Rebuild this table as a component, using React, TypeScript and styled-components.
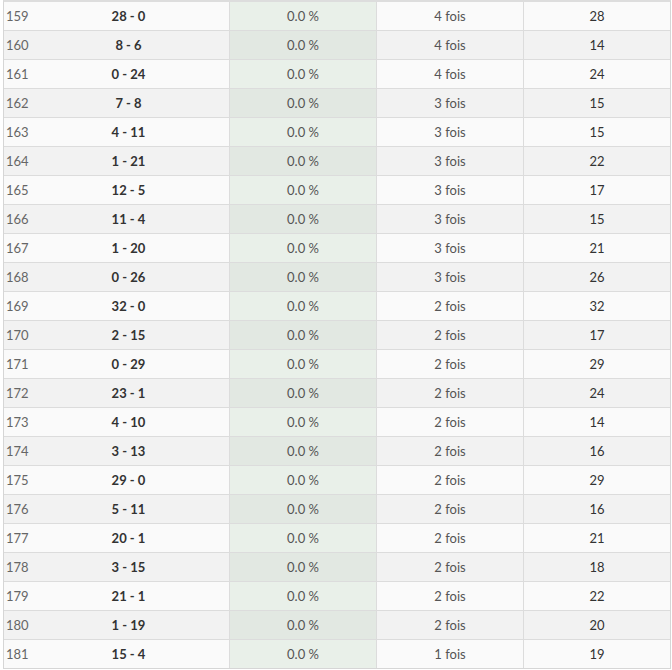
import React from 'react';
import styled, { createGlobalStyle } from 'styled-components';

// 行データ: [順位, スコア, 回数, 合計]
const rows: [number, string, number, number][] = [
  [159, '28 - 0', 4, 28],
  [160, '8 - 6', 4, 14],
  [161, '0 - 24', 4, 24],
  [162, '7 - 8', 3, 15],
  [163, '4 - 11', 3, 15],
  [164, '1 - 21', 3, 22],
  [165, '12 - 5', 3, 17],
  [166, '11 - 4', 3, 15],
  [167, '1 - 20', 3, 21],
  [168, '0 - 26', 3, 26],
  [169, '32 - 0', 2, 32],
  [170, '2 - 15', 2, 17],
  [171, '0 - 29', 2, 29],
  [172, '23 - 1', 2, 24],
  [173, '4 - 10', 2, 14],
  [174, '3 - 13', 2, 16],
  [175, '29 - 0', 2, 29],
  [176, '5 - 11', 2, 16],
  [177, '20 - 1', 2, 21],
  [178, '3 - 15', 2, 18],
  [179, '21 - 1', 2, 22],
  [180, '1 - 19', 2, 20],
  [181, '15 - 4', 1, 19],
];

const App = () => {
  return (
    <>
      <GlobalStyle />
      <Table>
        {rows.map(([rank, score, times, total], i) => (
          <Row key={rank} odd={i % 2 === 1}>
            <RankCell>{rank}</RankCell>
            <ScoreCell>{score}</ScoreCell>
            <PercentCell odd={i % 2 === 1}>0.0 %</PercentCell>
            <TimesCell>{times} fois</TimesCell>
            <TotalCell>{total}</TotalCell>
          </Row>
        ))}
      </Table>
    </>
  );
};

export default App;

const GlobalStyle = createGlobalStyle`
  body {
    margin: 0;
    background: #ffffff;
    font-family: Lato, "Open Sans", "Liberation Sans", sans-serif;
  }
`;

// テーブル全体
const Table = styled.div`
  box-sizing: border-box;
  margin-left: 3px;
  width: 668px;
  border-top: 2px solid #dddddd;
  border-left: 1px solid #d6d6d6;
  border-right: 1px solid #d6d6d6;
  border-bottom: 1px solid #d6d6d6;
  font-size: 13px;
`;

// 行
const Row = styled.div<{ odd: boolean }>`
  display: grid;
  grid-template-columns: 24px 202px 147px 147px 146px;
  height: 29px;
  box-sizing: border-box;
  border-bottom: 1px solid #dcdcdc;
  background-color: ${props => props.odd ? '#f2f2f2' : '#fafafa'};
  &:last-child {
    border-bottom: none;
    height: 28px;
  }
`;

// セル共通
const Cell = styled.div`
  display: flex;
  align-items: center;
  justify-content: center;
  box-sizing: border-box;
  white-space: nowrap;
  color: #555555;
`;

// 順位
const RankCell = styled(Cell)`
  justify-content: flex-start;
  padding-left: 2px;
  color: #666666;
`;

// スコア
const ScoreCell = styled(Cell)`
  font-weight: bold;
  color: #333333;
  border-right: 1px solid #dcdcdc;
`;

// 割合（緑の列）
const PercentCell = styled(Cell)<{ odd: boolean }>`
  background-color: ${props => props.odd ? '#e2e8e2' : '#e9f0e9'};
  border-right: 1px solid #dcdcdc;
`;

// 回数
const TimesCell = styled(Cell)`
  border-right: 1px solid #dcdcdc;
`;

// 合計
const TotalCell = styled(Cell)`
  color: #333333;
`;
